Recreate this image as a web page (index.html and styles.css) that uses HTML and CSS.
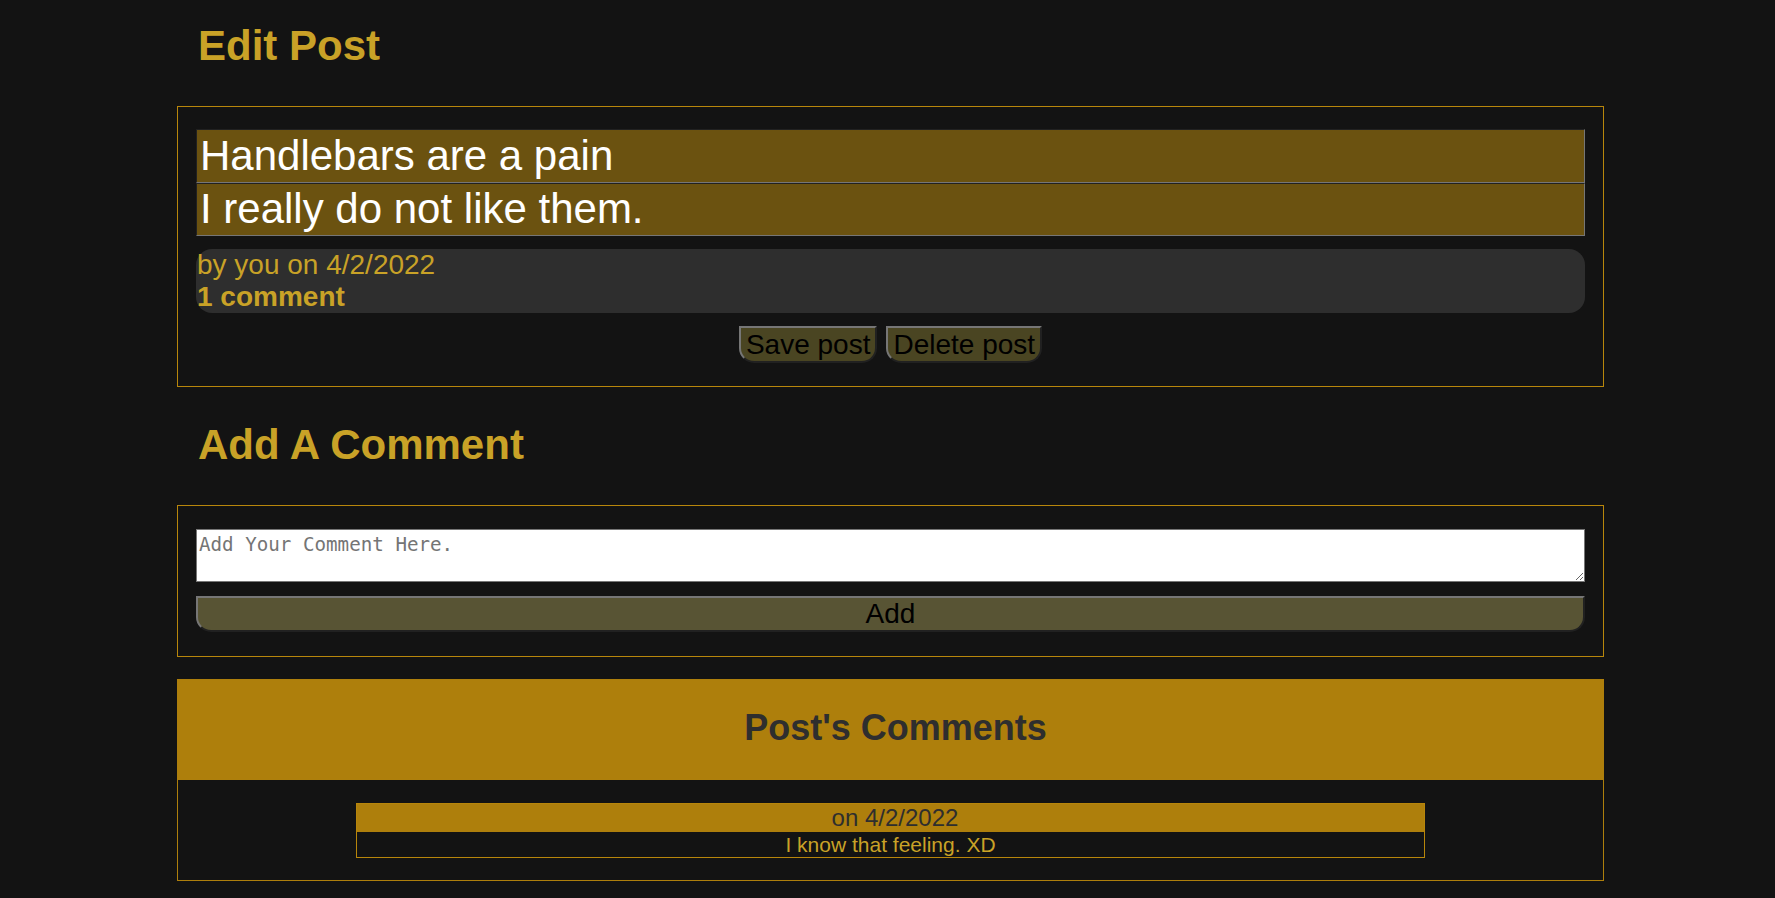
FILE: index.html
```html
<!DOCTYPE html>
<html lang="en">
<head>
<meta charset="utf-8">
<title>Edit Post</title>
<link rel="stylesheet" href="styles.css">
</head>
<body>
<main class="page">
  <h1 class="page-title title-edit">Edit Post</h1>
  <section class="panel panel-edit">
    <input class="post-field" type="text" value="Handlebars are a pain">
    <input class="post-field" type="text" value="I really do not like them.">
    <div class="post-meta">
      <div class="meta-line">by you on 4/2/2022</div>
      <div class="meta-count">1 comment</div>
    </div>
    <div class="actions">
      <button class="btn btn-small" type="button">Save post</button>
      <button class="btn btn-small" type="button">Delete post</button>
    </div>
  </section>

  <h1 class="page-title title-comment">Add A Comment</h1>
  <section class="panel panel-add">
    <textarea class="comment-input" placeholder="Add Your Comment Here."></textarea>
    <button class="btn btn-wide" type="button">Add</button>
  </section>

  <section class="panel panel-comments">
    <h2 class="comments-header">Post's Comments</h2>
    <div class="comments-list">
      <article class="comment-card">
        <div class="comment-date">on 4/2/2022</div>
        <div class="comment-body">I know that feeling. XD</div>
      </article>
    </div>
  </section>
</main>
</body>
</html>
```

FILE: styles.css
```css
* {
  box-sizing: border-box;
}

html, body {
  margin: 0;
  padding: 0;
  background: #131313;
}

body {
  font-family: "Liberation Sans", Arial, sans-serif;
  color: #c9a227;
}

.page {
  width: 1427px;
  margin-left: 177px;
  padding-top: 1px;
}

.page-title {
  font-size: 42px;
  font-weight: bold;
  line-height: 48px;
  color: #c9a227;
  margin: 0;
  padding-left: 21px;
}

.title-edit {
  margin-top: 21px;
  margin-bottom: 36px;
}

.title-comment {
  margin-top: 34px;
  margin-bottom: 36px;
}

.panel {
  border: 1px solid #b8860b;
}

.panel-edit {
  padding: 22px 18px 23px;
  display: flex;
  flex-direction: column;
}

.post-field {
  display: block;
  width: 100%;
  height: 53.5px;
  margin: 0;
  padding: 1px 3px;
  border: 1px inset #767676;
  background: #6b5210;
  color: #ffffff;
  font-family: "Liberation Sans", Arial, sans-serif;
  font-size: 42px;
}

.post-meta {
  margin-top: 13px;
  background: #2e2e2e;
  border-radius: 16px;
  font-size: 28px;
  line-height: 32px;
  color: #c9a227;
  padding-left: 1px;
}

.meta-count {
  font-weight: bold;
}

.actions {
  margin-top: 13px;
  display: flex;
  justify-content: center;
  gap: 9px;
}

.btn {
  font-family: "Liberation Sans", Arial, sans-serif;
  font-size: 28px;
  line-height: 32px;
  color: #000000;
  border: 2px outset #767676;
  border-radius: 0 0 15px 15px;
  margin: 0;
  cursor: pointer;
}

.btn-small {
  background: #4a4522;
  padding: 1px 5px;
  height: 37px;
}

.panel-add {
  padding: 23px 18px 24px;
  display: flex;
  flex-direction: column;
}

.comment-input {
  display: block;
  width: 100%;
  height: 53px;
  margin: 0;
  padding: 4px 2px 2px;
  border: 1px solid #767676;
  background: #ffffff;
  font-family: "DejaVu Sans Mono", monospace;
  font-size: 19.2px;
  line-height: 22px;
  color: #000;
}

.comment-input::placeholder {
  color: #757575;
}

.btn-wide {
  margin-top: 14px;
  width: 100%;
  height: 36px;
  padding: 0 6px;
  background: #585434;
}

.panel-comments {
  margin-top: 22px;
  margin-bottom: 17px;
  border-color: #ae7f0c;
}

.comments-header {
  margin: 0;
  height: 100px;
  padding-top: 27px;
  padding-left: 10px;
  background: #ae7f0c;
  color: #2e2e2e;
  font-size: 36px;
  line-height: 42px;
  font-weight: bold;
  text-align: center;
}

.comments-list {
  padding: 23px 0 22px;
  display: flex;
  justify-content: center;
}

.comment-card {
  width: 75%;
  border: 1px solid #b8860b;
  text-align: center;
}

.comment-date {
  background: #ae7f0c;
  color: #2e2e2e;
  font-size: 24px;
  line-height: 28px;
  padding-left: 9px;
}

.comment-body {
  background: #131313;
  color: #c9a227;
  font-size: 21px;
  line-height: 25px;
}
```
